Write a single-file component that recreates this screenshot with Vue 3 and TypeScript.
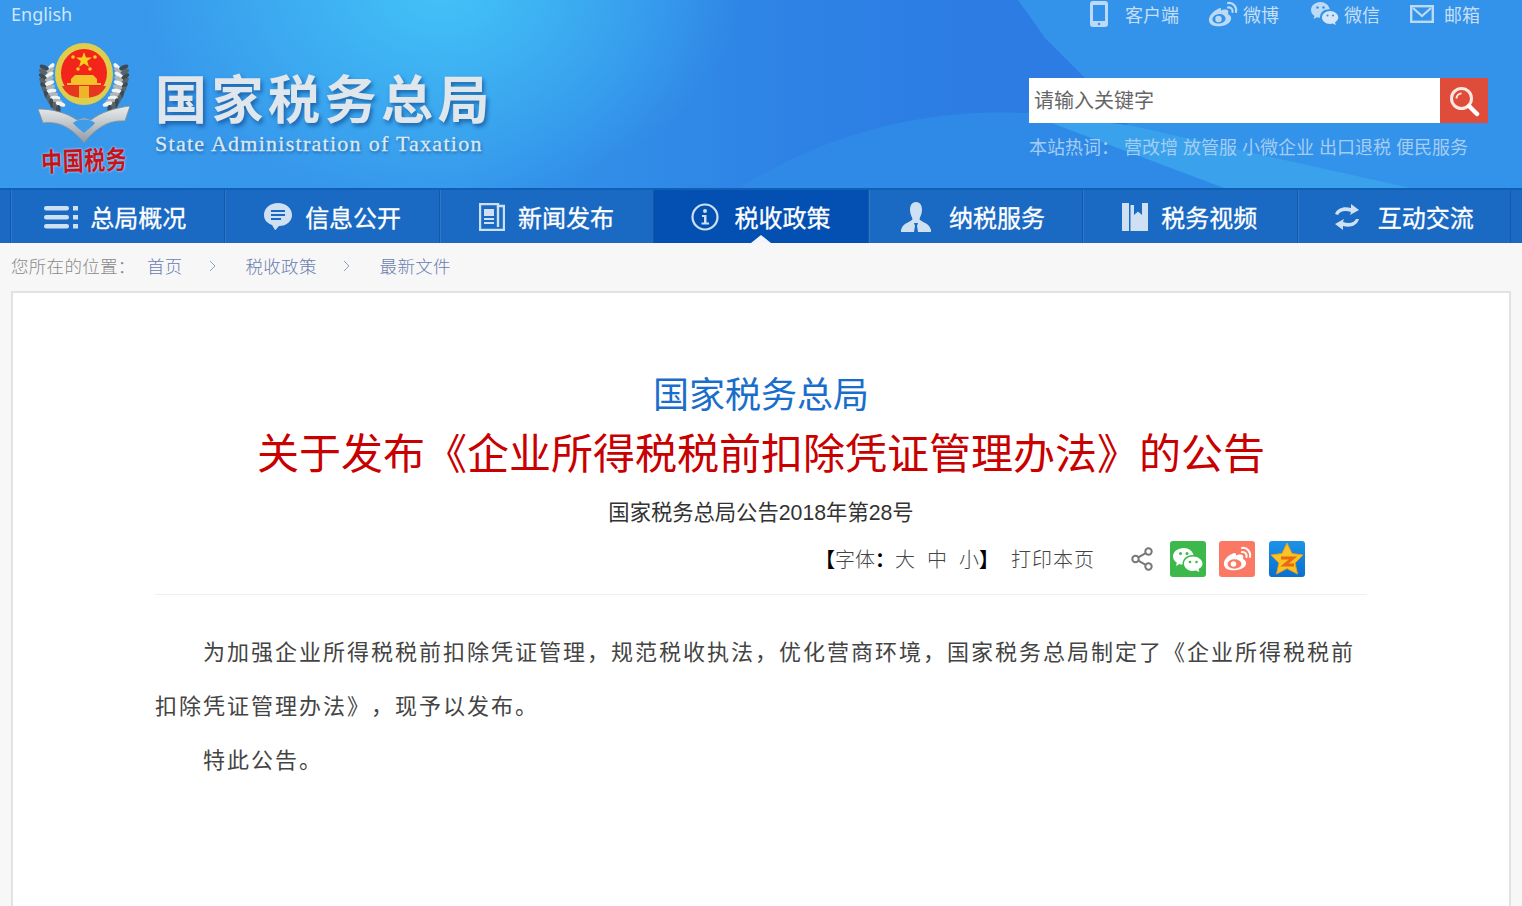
<script setup lang="ts">
const topLinks = ['客户端', '微博', '微信', '邮箱'];
const hotWords = ['营改增', '放管服', '小微企业', '出口退税', '便民服务'];
const navItems = ['总局概况', '信息公开', '新闻发布', '税收政策', '纳税服务', '税务视频', '互动交流'];
const crumbs = ['首页', '税收政策', '最新文件'];

// Laurel leaves on the left of the emblem; the right side is mirrored in the template.
interface Leaf { x: number; y: number; a: number; c: string }
const leafColors = ['#f2f4f4', '#3f494f', '#aeb6ba', '#59646a'];
const leaves: Leaf[] = [];
for (let i = 0; i < 22; i++) {
  const deg = -18 + i * 3.3;
  const rad = (deg * Math.PI) / 180;
  const r = i % 2 ? 41 : 35;
  leaves.push({
    x: 47 - r * Math.cos(rad),
    y: 35 + r * Math.sin(rad),
    a: (i % 2 ? 40 : -30) + deg,
    c: leafColors[i % leafColors.length],
  });
}
</script>

<template>
  <div class="page">
    <header class="header">
      <div class="brand-col">
        <a class="english">English</a>
        <div class="brand">
          <div class="logo">
            <svg class="emblem" viewBox="0 0 94 100" width="94" height="100">
              <defs>
                <linearGradient id="rib" x1="0" y1="0" x2="0" y2="1">
                  <stop offset="0" stop-color="#eceeee" />
                  <stop offset="1" stop-color="#8f9aa3" />
                </linearGradient>
              </defs>
              <g v-for="(l, i) in leaves" :key="i">
                <ellipse :cx="l.x" :cy="l.y" rx="5" ry="2.200" :fill="l.c" :transform="`rotate(${l.a} ${l.x} ${l.y})`" />
                <ellipse :cx="94 - l.x" :cy="l.y" rx="5" ry="2.200" :fill="l.c" :transform="`rotate(${-l.a} ${94 - l.x} ${l.y})`" />
              </g>
              <ellipse cx="47" cy="31" rx="29" ry="31" fill="#dfcd4c" />
              <ellipse cx="47" cy="30" rx="23" ry="24" fill="#f2241b" />
              <path d="M47 9 L49 14.500 L55 14.500 L50.200 18 L52 24 L47 20.500 L42 24 L43.800 18 L39 14.500 L45 14.500 Z" fill="#f6d21e" />
              <circle cx="36" cy="14" r="1.800" fill="#f6d21e" />
              <circle cx="58" cy="14" r="1.800" fill="#f6d21e" />
              <circle cx="41" cy="26" r="1.800" fill="#f6d21e" />
              <circle cx="53" cy="26" r="1.800" fill="#f6d21e" />
              <path d="M34 36 L38 32 H56 L60 36 V40 H34 Z" fill="#f3c12a" />
              <rect x="30" y="40" width="34" height="2" fill="#f3c12a" />
              <path d="M25 43 H69 C66 50 60 55 47 55 C34 55 28 50 25 43 Z" fill="#e5381f" />
              <path d="M42 43 H52 V55 H42 Z" fill="#f0b42a" />
              <path d="M1 66 C16 66 30 70 40 77 L47 75 L54 77 C64 69 78 65 93 63 L88 78 C72 77 60 84 47 100 C34 84 22 78 6 80 Z" fill="url(#rib)" stroke="#848d93" stroke-width="0.800" />
              <path d="M36 80 C42 75 52 75 58 80 C54 85 50 87 47 90 C44 87 40 85 36 80 Z" fill="#3f9ce9" />
            </svg>
            <div class="seal">中国税务</div>
          </div>
          <div class="titles">
            <h1 class="cn-title">国家税务总局</h1>
            <div class="en-title">State Administration of Taxation</div>
          </div>
        </div>
      </div>

      <div class="tools-col">
        <div class="top-links">
          <a v-for="(t, i) in topLinks" :key="t" class="top-link" :class="'tl' + i">
            <svg v-if="i === 0" viewBox="0 0 18 26" width="18" height="26">
              <path fill-rule="evenodd" d="M3 0 H15 A3 3 0 0 1 18 3 V23 A3 3 0 0 1 15 26 H3 A3 3 0 0 1 0 23 V3 A3 3 0 0 1 3 0 Z M3 4 V20 H15 V4 Z" fill="#bcd9f5" />
              <circle cx="9" cy="23" r="1.300" fill="#3a92e8" />
            </svg>
            <svg v-else-if="i === 1" viewBox="0 0 30 26" width="30" height="26">
              <path fill-rule="evenodd" d="M12 7 C6 9 0 15 1 20 C2 25 9 26 14 25 C20 24 24 20 23 16 C22.500 14 20 13.500 20 13 C21 10 20 9 18 8.500 C16 8.200 14 9 13 9.500 C13 8 13.500 6.500 12 7 Z M11 13 C7 13.500 4 16 4.500 19 C5 21.500 8 23 11.500 22.500 C15.500 22 18 19.500 17.500 17 C17 14.500 14.500 12.700 11 13 Z" fill="#bcd9f5" />
              <circle cx="10.500" cy="18" r="3.200" fill="#bcd9f5" />
              <path d="M20 2 C25 1 29 6 28 11 M20 6.500 C23 6 25 8.500 24.500 11" fill="none" stroke="#bcd9f5" stroke-width="2.200" stroke-linecap="round" />
            </svg>
            <svg v-else-if="i === 2" viewBox="0 0 29 26" width="29" height="26">
              <path d="M10.500 1 C5 1 1 4.800 1 9 C1 11.500 2.300 13.500 4.500 15 L3.500 18 L7 16.300 C8 16.600 9 16.800 10 16.800 C9.800 11.500 14 8 19.800 8.200 C18.800 4 15 1 10.500 1 Z" fill="#bcd9f5" />
              <path d="M20 10 C15.500 10 12 13 12 16.500 C12 20 15.500 23 20 23 C21 23 22 22.800 22.800 22.500 L25.800 24 L25 21.300 C27 20 28.300 18.300 28.300 16.500 C28.300 13 24.600 10 20 10 Z" fill="#d4e6f8" />
              <circle cx="7.500" cy="6.500" r="1.300" fill="#3a92e8" />
              <circle cx="13.500" cy="6.500" r="1.300" fill="#3a92e8" />
              <circle cx="17.500" cy="14.500" r="1.100" fill="#3a92e8" />
              <circle cx="23" cy="14.500" r="1.100" fill="#3a92e8" />
            </svg>
            <svg v-else viewBox="0 0 24 18" width="24" height="18">
              <rect x="1.200" y="1.200" width="21.600" height="15.600" fill="none" stroke="#bcd9f5" stroke-width="2.400" />
              <path d="M3 3 L12 11 L21 3" fill="none" stroke="#bcd9f5" stroke-width="2.200" />
            </svg>
            <span>{{ t }}</span>
          </a>
        </div>
        <div class="search">
          <div class="search-input">请输入关键字</div>
          <button class="search-btn" type="button" aria-label="搜索">
            <svg viewBox="0 0 32 32" width="32" height="32">
              <circle cx="13.500" cy="13.500" r="10" fill="none" stroke="#fde8e2" stroke-width="3" />
              <path d="M8.500 13.500 A5 5 0 0 1 13.500 8.500" fill="none" stroke="#fde8e2" stroke-width="2" />
              <path d="M21 21 L29 29" stroke="#fff" stroke-width="4.500" stroke-linecap="round" />
            </svg>
          </button>
        </div>
        <div class="hot">
          <span class="hot-label">本站热词：</span>
          <a v-for="w in hotWords" :key="w" class="hot-word">{{ w }}</a>
        </div>
      </div>
    </header>

    <nav class="nav">
      <a v-for="(n, i) in navItems" :key="n" class="nav-item" :class="['n' + i, { active: i === 3 }]">
        <svg v-if="i === 0" viewBox="0 0 36 24" width="36" height="24">
          <g fill="#cfe0f2">
            <rect x="0" y="1" width="25" height="4.500" rx="2.200" />
            <rect x="0" y="10" width="25" height="4.500" rx="2.200" />
            <rect x="0" y="19" width="25" height="4.500" rx="2.200" />
            <rect x="29" y="1" width="5" height="4.500" />
            <rect x="29" y="10" width="5" height="4.500" />
            <rect x="29" y="19" width="5" height="4.500" />
          </g>
        </svg>
        <svg v-else-if="i === 1" viewBox="0 0 30 29" width="30" height="29">
          <path d="M15 1 C7 1 1 6 1 13 C1 18 4 21 9 23 L12 28 C13 28 14 26 16 24 C24 24 29 19 29 13 C29 6 23 1 15 1 Z" fill="#cfe0f2" />
          <path d="M8 9 H22 M8 13 H22 M8 17 H18" stroke="#1a69c2" stroke-width="2" />
        </svg>
        <svg v-else-if="i === 2" viewBox="0 0 26 28" width="26" height="28">
          <path d="M1 1 H19 V3 H25 V27 H1 Z" fill="none" stroke="#cfe0f2" stroke-width="2.400" />
          <path d="M19 3 V24" stroke="#cfe0f2" stroke-width="2.400" />
          <rect x="5" y="6" width="10" height="7" fill="#cfe0f2" />
          <path d="M5 16 H15 M5 20 H15" stroke="#cfe0f2" stroke-width="2.200" />
        </svg>
        <svg v-else-if="i === 3" viewBox="0 0 28 28" width="28" height="28">
          <circle cx="14" cy="14" r="12.500" fill="none" stroke="#cfe0f2" stroke-width="2.200" />
          <circle cx="14" cy="8" r="2" fill="#cfe0f2" />
          <path d="M11 12 H15.500 V19.500 H18 V21.500 H10.500 V19.500 H13 V14 H11 Z" fill="#cfe0f2" />
        </svg>
        <svg v-else-if="i === 4" viewBox="0 0 32 30" width="32" height="30">
          <path d="M16 0 C11.500 0 10 4 10 8 C10 12 12 15 12.500 17 C12 20 3 20 1 28 L1 30 H14 L15 24 L14 21 H18 L17 24 L18 30 H31 V28 C29 20 20 20 19.500 17 C20 15 22 12 22 8 C22 4 20.500 0 16 0 Z" fill="#cfe0f2" />
        </svg>
        <svg v-else-if="i === 5" viewBox="0 0 26 28" width="26" height="28">
          <path d="M0 0 H7 V28 H0 Z M8.500 2 H12 V12 L16 8.500 L20 12 V0 H26 V28 H8.500 Z" fill="#cfe0f2" />
        </svg>
        <svg v-else viewBox="0 0 26 28" width="26" height="28">
          <path d="M1 11 C3 5 10 3 17 5 L17 1 L25 7 L16 12 L17 9 C11 7 6 8 4 12 Z" fill="#cfe0f2" />
          <path d="M25 16 C23 23 16 25 9 23 L9 27 L1 21 L10 16 L9 19 C15 21 20 20 22 16 Z" fill="#cfe0f2" />
        </svg>
        <span>{{ n }}</span>
      </a>
    </nav>

    <div class="crumbs">
      <span class="crumb-label">您所在的位置：</span>
      <template v-for="(c, i) in crumbs" :key="c">
        <a class="crumb">{{ c }}</a>
        <svg v-if="i < 2" class="chev" viewBox="0 0 7 12" width="7" height="12">
          <path d="M1 1 L6 6 L1 11" fill="none" stroke="#8ea3c9" stroke-width="1" />
        </svg>
      </template>
    </div>

    <main class="card">
      <h2 class="issuer">国家税务总局</h2>
      <h1 class="headline">关于发布《企业所得税税前扣除凭证管理办法》的公告</h1>
      <p class="docno">国家税务总局公告2018年第28号</p>
      <div class="actions">
        <span class="font-size"><b>【</b>字体<b>：</b><a>大</a><a>中</a><a>小</a><b>】</b></span>
        <a class="print">打印本页</a>
        <svg class="share" viewBox="0 0 22 24" width="22" height="24">
          <g fill="none" stroke="#777" stroke-width="2">
            <circle cx="17.500" cy="4.500" r="3.200" />
            <circle cx="4.500" cy="12" r="3.200" />
            <circle cx="17.500" cy="19.500" r="3.200" />
            <path d="M7.300 10.400 L14.700 6.100 M7.300 13.600 L14.700 17.900" />
          </g>
        </svg>
        <span class="soc wechat">
          <svg viewBox="0 0 36 36" width="36" height="36">
            <path d="M14 7 C7.500 7 3 11 3 15.500 C3 18 4.500 20.300 6.800 21.800 L6 25 L9.500 23 C10.500 23.400 11.500 23.600 12.600 23.600 C12 18 17 13.500 23.500 14 C22.500 10 18.700 7 14 7 Z" fill="#fff" />
            <path d="M23 15.500 C17.800 15.500 14 18.800 14 22.700 C14 26.600 17.800 30 23 30 C24 30 25 29.800 26 29.500 L29.300 31 L28.500 28 C31 26.700 32.500 24.800 32.500 22.700 C32.500 18.800 28.400 15.500 23 15.500 Z" fill="#fff" />
            <circle cx="10.500" cy="12.500" r="1.500" fill="#3cb94a" />
            <circle cx="17" cy="12.500" r="1.500" fill="#3cb94a" />
            <circle cx="20" cy="21" r="1.300" fill="#3cb94a" />
            <circle cx="26.500" cy="21" r="1.300" fill="#3cb94a" />
          </svg>
        </span>
        <span class="soc weibo">
          <svg viewBox="0 0 36 36" width="36" height="36">
            <path d="M15 12 C9 14 4 19 5 24 C6 29 13 30 18 29 C24 28 28 25 27 21 C26.500 19 24 18 24 18 C25 15 24 14 22 13.500 C20 13.200 18 14 17 14.500 C17 13 17 11.500 15 12 Z" fill="#fff" />
            <ellipse cx="15.500" cy="23" rx="7" ry="4.700" fill="#fb7864" />
            <circle cx="14.500" cy="23" r="2.800" fill="#fff" />
            <path d="M23 7 C28 6 32 11 31 16 M23 11 C26 10.500 28 13 27.500 16" fill="none" stroke="#fff" stroke-width="2" stroke-linecap="round" />
          </svg>
        </span>
        <span class="soc qzone">
          <svg viewBox="0 0 36 36" width="36" height="36">
            <path d="M18 2 L23 12.500 L34 14 L26 22 L28.500 33 L18 27.500 L7.500 33 L10 22 L2 14 L13 12.500 Z" fill="#f7c325" stroke="#f39c12" stroke-width="1" />
            <path d="M12 17 H24 L15.500 24 H25" fill="none" stroke="#e66a12" stroke-width="3" />
          </svg>
        </span>
      </div>
      <article class="article">
        <p>为加强企业所得税税前扣除凭证管理，规范税收执法，优化营商环境，国家税务总局制定了《企业所得税税前扣除凭证管理办法》，现予以发布。</p>
        <p>特此公告。</p>
      </article>
    </main>
  </div>
</template>

<style>
html, body { margin: 0; padding: 0; background: #f7f7f7; overflow: hidden; }
</style>

<style scoped>
.page {
  width: 1522px;
  height: 906px;
  overflow: hidden;
  display: flex;
  flex-direction: column;
  font-family: "Liberation Sans", "Noto Sans CJK SC", sans-serif;
  background: #f7f7f7;
  text-spacing-trim: space-all;
}
a { text-decoration: none; color: inherit; }
h1, h2, p { margin: 0; font-weight: 400; }

.header {
  height: 188px;
  flex: none;
  position: relative;
  display: flex;
  justify-content: space-between;
  box-sizing: border-box;
  padding: 0 34px 0 0;
  background:
    radial-gradient(circle 488px at 1000px 600px, #2f8ae7 0 99.800%, rgba(47, 138, 231, 0) 100%),
    radial-gradient(ellipse 300px 210px at 440px -10px, #43c2f7 0, rgba(67, 194, 247, 0) 100%),
    linear-gradient(90deg, #3898eb 0, #3697eb 30%, #3291e9 36%, #2e82e5 52%, #2c7ce4 64%, #2c7ce4 100%);
}
.header::before,
.header::after {
  content: "";
  position: absolute;
  inset: 0;
}
.header::before {
  background: #3393ea;
  clip-path: polygon(1018px 0, 1045px 38px, 1085px 78px, 1128px 125px, 1224px 188px, 1522px 188px, 1522px 0);
}
.header::after {
  background: #3aa2ec;
  clip-path: polygon(1025px 113px, 1128px 125px, 1410px 188px, 1224px 188px);
}
.brand-col, .tools-col { position: relative; z-index: 1; }
.brand-col { display: flex; flex-direction: column; }
.english {
  display: block;
  margin: 2px 0 0 11px;
  font-size: 18px;
  line-height: 24px;
  color: #cfe6fa;
  font-family: "Noto Sans", "Liberation Sans", sans-serif;
}
.brand { display: flex; margin: 17px 0 0 37px; }
.logo { width: 94px; display: flex; flex-direction: column; align-items: center; }
.emblem { display: block; }
.seal {
  margin-top: 1px;
  font-size: 21px;
  line-height: 30px;
  font-weight: 700;
  letter-spacing: 0.500px;
  color: #c8121a;
  white-space: nowrap;
  font-family: "Noto Sans CJK SC", sans-serif;
  text-shadow: 0 0 2px #d9edfb;
  transform: rotate(-2deg) scaleY(1.250);
}
.titles { margin: 28px 0 0 24px; }
.cn-title {
  font-size: 52px;
  line-height: 52px;
  font-weight: 700;
  letter-spacing: 4.500px;
  white-space: nowrap;
  font-family: "Noto Sans CJK SC", sans-serif;
  color: #dfe6ec;
  text-shadow: 2px 3px 4px rgba(10, 60, 130, 0.600);
}
.en-title {
  margin-top: 8px;
  font-family: "Liberation Serif", serif;
  font-size: 22px;
  line-height: 26px;
  letter-spacing: 1.270px;
  white-space: nowrap;
  color: #dde7ef;
  -webkit-text-stroke: 0.300px #dde7ef;
  text-shadow: 1px 2px 3px rgba(10, 60, 130, 0.600);
}

.tools-col { width: 459px; display: flex; flex-direction: column; }
.top-links { height: 28px; display: flex; align-items: center; font-size: 18px; color: #c6def6; font-family: "Noto Sans CJK SC", sans-serif; }
.top-link { display: flex; align-items: center; white-space: nowrap; }
.tl0 { margin-left: 61px; gap: 17px; }
.tl1 { margin-left: 29px; gap: 5px; }
.tl2 { margin-left: 31px; gap: 5px; }
.tl3 { margin-left: 30px; gap: 10px; }
.search { display: flex; margin-top: 50px; height: 45px; }
.search-input {
  width: 411px;
  box-sizing: border-box;
  padding-left: 5px;
  background: #fff;
  color: #666;
  font-size: 20px;
  line-height: 43px;
  font-family: "Noto Sans CJK SC", sans-serif;
}
.search-btn {
  width: 48px;
  height: 45px;
  border: 0;
  padding: 0;
  background: #e04c3a;
  display: flex;
  align-items: center;
  justify-content: center;
}
.hot {
  margin-top: 10px;
  font-size: 18px;
  line-height: 26px;
  white-space: nowrap;
  color: #a4cdf3;
  display: flex;
  font-family: "Noto Sans CJK SC", sans-serif;
}
.hot-label { width: 95px; }
.hot-word { margin-right: 5px; }

.nav {
  height: 55px;
  flex: none;
  box-sizing: border-box;
  border-top: 2px solid #0f5fb4;
  background: #1a69c2;
  padding: 0 11px 0 10px;
  display: grid;
  grid-template-columns: repeat(7, 1fr);
}
.nav-item {
  box-sizing: border-box;
  position: relative;
  display: flex;
  align-items: center;
  justify-content: center;
  color: #fff;
  font-size: 24px;
  font-family: "Noto Sans CJK SC", sans-serif;
  -webkit-text-stroke: 0.300px #fff;
  border-left: 1px solid #1459a8;
  box-shadow: inset 1px 0 0 #2a79cf;
}
.nav-item span { margin-bottom: 1px; }
.n0 { padding-right: 5px; }
.n0 svg { margin-right: 10px; }
.n1 svg { margin-right: 12px; }
.n2 svg { margin-right: 13px; }
.n3 svg { margin-right: 15px; }
.n4 { padding-right: 6px; }
.n4 svg { margin-right: 17px; }
.n5 svg { margin-right: 13px; }
.n6 svg { margin-right: 18px; }
.nav-item:last-child { border-right: 1px solid #1459a8; }
.nav-item.active { background: #034fb2; box-shadow: none; }
.nav-item.active::after {
  content: "";
  position: absolute;
  left: 50%;
  bottom: 0;
  margin-left: -10px;
  border-left: 10px solid transparent;
  border-right: 10px solid transparent;
  border-bottom: 8px solid #f2f6fb;
}

.crumbs {
  height: 48px;
  flex: none;
  display: flex;
  align-items: center;
  padding: 0 0 4px 11px;
  box-sizing: border-box;
  font-size: 17.500px;
  letter-spacing: 0.300px;
  color: #8a8a8a;
  font-family: "Noto Sans CJK SC", sans-serif;
  font-weight: 300;
}
.crumb-label { width: 136px; }
.crumb { color: #6a7db0; }
.chev { margin: 2px 29.500px 0 26.400px; }

.card {
  flex: 1;
  margin: 0 11px;
  box-sizing: border-box;
  border: 2px solid #e2e2e2;
  border-bottom: 0;
  background: #fff;
  padding: 0 142px;
  text-align: center;
}
.issuer {
  margin-top: 78px;
  font-size: 36px;
  line-height: 50px;
  color: #1a6ecb;
}
.headline {
  margin-top: 4px;
  font-size: 42px;
  line-height: 60px;
  color: #c80000;
  white-space: nowrap;
}
.docno {
  margin-top: 10px;
  font-size: 21.300px;
  line-height: 36px;
  color: #333;
}
.actions {
  margin-top: 5px;
  height: 45px;
  display: flex;
  align-items: center;
  justify-content: flex-end;
  box-sizing: border-box;
  padding-right: 62px;
  font-size: 20px;
  color: #444;
  font-weight: 300;
}
.font-size { white-space: nowrap; }
.font-size b { color: #000; font-weight: 700; }
.font-size a { margin-right: 12px; }
.font-size a:last-of-type { margin-right: 0; }
.print { margin-left: 12px; letter-spacing: 1px; }
.share { margin-left: 36px; }
.soc { display: block; width: 36px; height: 36px; border-radius: 3px; }
.soc svg { display: block; }
.wechat { margin-left: 17px; background: #3cb94a; }
.weibo { margin-left: 13px; background: #fb7864; }
.qzone { margin-left: 14px; background: linear-gradient(180deg, #1b93e8, #0a6fd0); }

.article {
  border-top: 1px solid #eee;
  margin-top: 13px;
  padding-top: 31px;
  text-align: left;
  font-size: 22px;
  letter-spacing: 2px;
  line-height: 54px;
  color: #444;
  font-weight: 300;
}
.article p { text-indent: 48px; }
</style>
